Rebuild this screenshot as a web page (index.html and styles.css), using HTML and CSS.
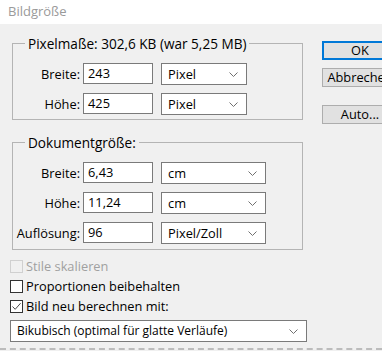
FILE: index.html
```html
<!DOCTYPE html>
<html lang="de">
<head>
    <meta charset="UTF-8">
    <title>Bildgröße</title>
    <link rel="stylesheet" href="styles.css">
</head>
<body>
    <div class="titlebar">Bildgröße</div>

    <div class="dialog">
        <div class="main">
            <fieldset class="group">
                <legend>Pixelmaße: 302,6 KB (war 5,25 MB)</legend>
                <div class="row">
                    <label class="lbl">Breite:</label>
                    <div class="field">243</div>
                    <div class="dropdown short">Pixel
                        <svg class="chev" width="9" height="5" viewBox="0 0 9 5"><path d="M0.5 0.5 L4.5 4.5 L8.5 0.5" fill="none" stroke="#707070" stroke-width="1"/></svg>
                    </div>
                </div>
                <div class="row">
                    <label class="lbl">Höhe:</label>
                    <div class="field">425</div>
                    <div class="dropdown short">Pixel
                        <svg class="chev" width="9" height="5" viewBox="0 0 9 5"><path d="M0.5 0.5 L4.5 4.5 L8.5 0.5" fill="none" stroke="#707070" stroke-width="1"/></svg>
                    </div>
                </div>
            </fieldset>

            <fieldset class="group second">
                <legend>Dokumentgröße:</legend>
                <div class="row">
                    <label class="lbl">Breite:</label>
                    <div class="field">6,43</div>
                    <div class="dropdown">cm
                        <svg class="chev" width="9" height="5" viewBox="0 0 9 5"><path d="M0.5 0.5 L4.5 4.5 L8.5 0.5" fill="none" stroke="#707070" stroke-width="1"/></svg>
                    </div>
                </div>
                <div class="row">
                    <label class="lbl">Höhe:</label>
                    <div class="field">11,24</div>
                    <div class="dropdown">cm
                        <svg class="chev" width="9" height="5" viewBox="0 0 9 5"><path d="M0.5 0.5 L4.5 4.5 L8.5 0.5" fill="none" stroke="#707070" stroke-width="1"/></svg>
                    </div>
                </div>
                <div class="row">
                    <label class="lbl">Auflösung:</label>
                    <div class="field">96</div>
                    <div class="dropdown">Pixel/Zoll
                        <svg class="chev" width="9" height="5" viewBox="0 0 9 5"><path d="M0.5 0.5 L4.5 4.5 L8.5 0.5" fill="none" stroke="#707070" stroke-width="1"/></svg>
                    </div>
                </div>
            </fieldset>

            <div class="checks">
                <div class="check disabled"><span class="box"></span>Stile skalieren</div>
                <div class="check"><span class="box"></span>Proportionen beibehalten</div>
                <div class="check"><span class="box">
                    <svg width="11" height="11" viewBox="0 0 11 11"><path d="M1.5 5.5 L4.2 8.3 L9.6 2.2" fill="none" stroke="#333" stroke-width="0.9"/></svg>
                </span>Bild neu berechnen mit:</div>
            </div>

            <div class="dropdown wide">Bikubisch (optimal für glatte Verläufe)
                <svg class="chev" width="9" height="5" viewBox="0 0 9 5"><path d="M0.5 0.5 L4.5 4.5 L8.5 0.5" fill="none" stroke="#707070" stroke-width="1"/></svg>
            </div>
        </div>

        <div class="buttons">
            <button class="btn default">OK</button>
            <button class="btn">Abbrechen</button>
            <button class="btn auto">Auto...</button>
        </div>
    </div>

    <div class="dashes"></div>
</body>
</html>
```

FILE: styles.css
```css
body {
    margin: 0;
    background-color: #f0f0f0;
    font-family: "Open Sans", "Noto Sans", sans-serif;
    font-size: 12.8px;
    color: #000;
    width: 382px;
    height: 351px;
    overflow: hidden;
    position: relative;
}
.titlebar {
    height: 24px;
    background-color: #fff;
    color: #9a9a9a;
    padding-left: 8px;
    font-size: 13px;
    line-height: 22px;
}
.dialog {
    display: flex;
}
.main {
    padding-left: 10px;
    width: 296px;
    flex-shrink: 0;
}
.group {
    margin: 11px 0 0 2px;
    width: 291px;
    box-sizing: border-box;
    border: 1px solid #b4b4b4;
    padding: 11px 0 5px 0;
}
.group.second {
    margin-top: 14px;
    padding-bottom: 6px;
}
.group legend {
    margin-left: 12px;
    padding: 0 3px;
    font-size: 13.6px;
    line-height: 17px;
}
.row {
    display: flex;
    align-items: center;
    height: 21px;
    margin-bottom: 9px;
}
.row:last-child {
    margin-bottom: 0;
}
.lbl {
    width: 67px;
    text-align: right;
    padding-right: 3px;
    flex-shrink: 0;
}
.field {
    width: 70px;
    height: 21px;
    box-sizing: border-box;
    border: 1px solid #7a7a7a;
    background-color: #fff;
    padding-left: 4px;
    line-height: 18px;
}
.dropdown {
    position: relative;
    width: 105px;
    height: 22px;
    box-sizing: border-box;
    margin-left: 8px;
    border: 1px solid #7a7a7a;
    background-color: #fff;
    padding-left: 6px;
    line-height: 20px;
}
.dropdown.short {
    width: 86px;
}
.dropdown.wide {
    width: 297px;
    margin: 4px 0 0 0;
    font-size: 12px;
}
.chev {
    position: absolute;
    right: 8px;
    top: 8px;
}
.checks {
    margin-top: 6px;
}
.check {
    display: flex;
    align-items: center;
    height: 20px;
}
.box {
    width: 13px;
    height: 13px;
    box-sizing: border-box;
    border: 1px solid #333;
    background-color: #fff;
    margin-right: 3px;
    display: flex;
    align-items: center;
    justify-content: center;
}
.check.disabled {
    color: #a0a0a0;
}
.check.disabled .box {
    border-color: #d0d0d0;
    background-color: #f0f0f0;
}
.buttons {
    display: flex;
    flex-direction: column;
    padding-left: 16px;
    padding-top: 17px;
}
.btn {
    width: 76px;
    height: 19px;
    box-sizing: border-box;
    font-family: "Open Sans", "Noto Sans", sans-serif;
    font-size: 12.8px;
    line-height: 15px;
    padding: 0;
    background-color: #e1e1e1;
    border: 1px solid #adadad;
    color: #000;
    margin-bottom: 8px;
}
.btn.default {
    border: 2px solid #0078d7;
}
.btn.auto {
    margin-top: 10px;
}
.dashes {
    position: absolute;
    left: 0;
    bottom: 1px;
    width: 382px;
    border-top: 2px dashed #bcbcbc;
}
```
